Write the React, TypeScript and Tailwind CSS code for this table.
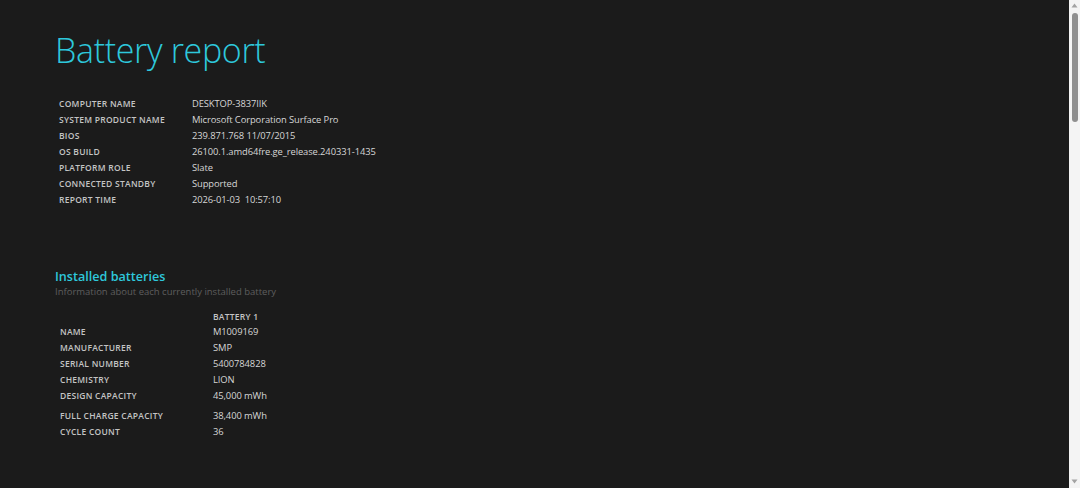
import React from "react"

const systemInfo = [
  { label: "Computer name", value: "DESKTOP-3837IIK" },
  { label: "System product name", value: "Microsoft Corporation Surface Pro" },
  { label: "BIOS", value: "239.871.768 11/07/2015" },
  { label: "OS build", value: "26100.1.amd64fre.ge_release.240331-1435" },
  { label: "Platform role", value: "Slate" },
  { label: "Connected standby", value: "Supported" },
  { label: "Report time", value: "2026-01-03  10:57:10" },
]

const batteryInfo = [
  { label: "Name", value: "M1009169" },
  { label: "Manufacturer", value: "SMP" },
  { label: "Serial number", value: "5400784828" },
  { label: "Chemistry", value: "LION" },
  { label: "Design capacity", value: "45,000 mWh" },
  { label: "Full charge capacity", value: "38,400 mWh", gap: true },
  { label: "Cycle count", value: "36" },
]

function Row({ label, value, labelWidth, gap }: { label: string; value: string; labelWidth: string; gap?: boolean }) {
  return (
    <div className={gap ? "flex h-4 items-center mt-1" : "flex h-4 items-center"}>
      <div className={`${labelWidth} shrink-0 text-[8.5px] font-semibold uppercase tracking-[0.03em] text-[#c4c4c4]`}>
        {label}
      </div>
      <div className="whitespace-pre text-[9.4px] tracking-[-0.01em] text-[#d6d6d6]">{value}</div>
    </div>
  )
}

export default function App() {
  return (
    <div className="flex h-screen w-full overflow-hidden bg-[#1b1b1b] font-['Open_Sans',sans-serif]">
      <main className="flex-1 pt-[25px]">
        <h1 className="pl-[55px] text-[34px] font-light leading-[50px] tracking-[-0.01em] text-[#2ec8dc]">
          Battery report
        </h1>

        <section className="mt-[21px] pl-[59px]">
          {systemInfo.map((row) => (
            <Row key={row.label} label={row.label} value={row.value} labelWidth="w-[133px]" />
          ))}
        </section>

        <section className="mt-[61px] pl-[55px]">
          <h2 className="text-[12.6px] font-semibold leading-4 text-[#2ec8dc]">Installed batteries</h2>
          <p className="text-[9.5px] leading-[14px] text-[#5e5e5e]">Information about each currently installed battery</p>

          <div className="mt-[10px] pl-[5px]">
            <div className="flex h-4 items-center">
              <div className="w-[153px] shrink-0" />
              <div className="text-[8.5px] font-semibold uppercase tracking-[0.03em] text-[#c4c4c4]">Battery 1</div>
            </div>
            <div className="mt-[-1px]">
              {batteryInfo.map((row) => (
                <Row key={row.label} label={row.label} value={row.value} labelWidth="w-[153px]" gap={row.gap} />
              ))}
            </div>
          </div>
        </section>
      </main>

      <aside className="flex w-[11px] shrink-0 flex-col items-center bg-[#f4f4f4]">
        <svg width="7" height="5" viewBox="0 0 7 5" className="mt-[3px]">
          <path d="M3.5 0.5 L6.5 4.5 L0.5 4.5 Z" fill="#a3a3a3" />
        </svg>
        <div className="mt-[5px] h-[109px] w-[6px] rounded-[3px] bg-[#8f8f8f]" />
        <div className="flex-1" />
        <svg width="7" height="5" viewBox="0 0 7 5" className="mb-[4px]">
          <path d="M0.5 0.5 L6.5 0.5 L3.5 4.5 Z" fill="#a3a3a3" />
        </svg>
      </aside>
    </div>
  )
}
